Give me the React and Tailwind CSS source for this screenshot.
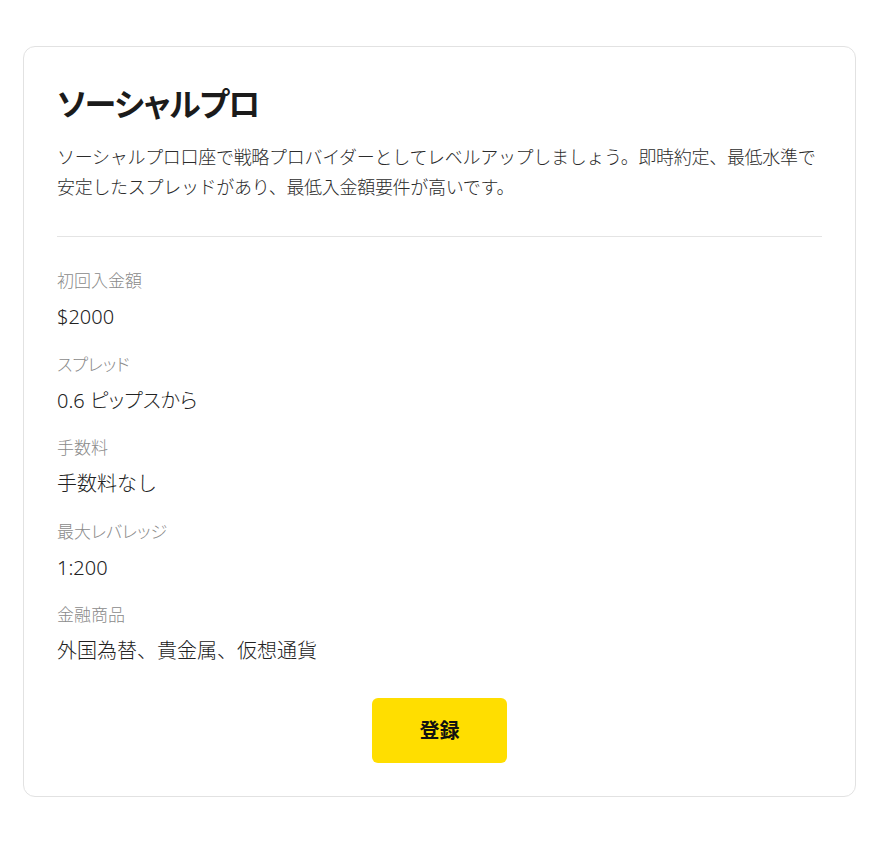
export default function App() {
  const items = [
    ["初回入金額", "$2000", false],
    ["スプレッド", "0.6 ピップスから", true],
    ["手数料", "手数料なし", false],
    ["最大レバレッジ", "1:200", false],
    ["金融商品", "外国為替、貴金属、仮想通貨", false],
  ];
  return (
    <div
      className="min-h-screen bg-white pt-[46px] pl-[23px]"
      style={{ fontFamily: '"Noto Sans", "Noto Sans CJK JP", sans-serif' }}
    >
      <div className="w-[833px] rounded-[12px] border border-[#e2e2e2] bg-white pt-[37px] px-[33px] pb-[33px]">
        <h1 className="text-[32px] leading-[40px] font-bold tracking-[-1px] text-[#1b1b1b] [font-feature-settings:'palt']">
          ソーシャルプロ
        </h1>
        <p className="mt-[18px] text-[18px] leading-[30px] font-light tracking-[-0.3px] text-[#2b2b2b]">
          ソーシャルプロ口座で戦略プロバイダーとしてレベルアップしましょう。即時約定、最低水準で
          <br />
          安定したスプレッドがあり、最低入金額要件が高いです。
        </p>
        <div className="mt-[34px] h-px bg-[#e4e4e4]" />
        <div className="mt-[32px] flex flex-col gap-[21.5px]">
          {items.map(([label, value, palt]) => (
            <div key={label} className="flex flex-col">
              <div className="text-[17px] leading-[24px] font-light text-[#8a8a8a] [font-feature-settings:'palt']">
                {label}
              </div>
              <div
                className={
                  palt
                    ? "mt-[10px] text-[20px] leading-[28px] font-light text-[#222] [font-feature-settings:'palt']"
                    : "mt-[10px] text-[20px] leading-[28px] font-light text-[#222]"
                }
              >
                {value}
              </div>
            </div>
          ))}
        </div>
        <div className="mt-[33px] flex justify-center">
          <button className="h-[65px] w-[135px] rounded-[6px] bg-[#ffde00] text-[20px] font-bold text-[#111]">
            登録
          </button>
        </div>
      </div>
    </div>
  );
}
